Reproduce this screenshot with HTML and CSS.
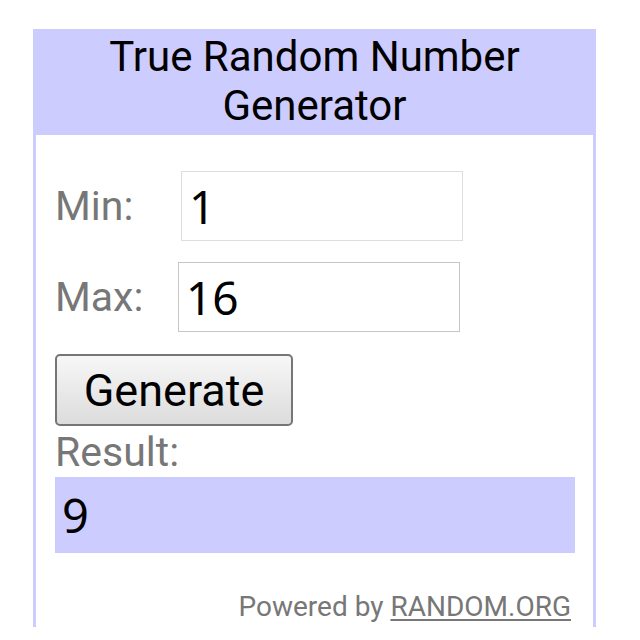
FILE: index.html
```html
<!DOCTYPE html>
<html>
<head>
<meta charset="utf-8">
<link rel="stylesheet" href="styles.css">
</head>
<body>
<div class="widget">
  <div class="header">True Random Number Generator</div>
  <div class="body">
    <div class="row">
      <span class="label label-min">Min:</span>
      <input class="num num-min" type="text" value="1">
    </div>
    <div class="row row-max">
      <span class="label label-max">Max:</span>
      <input class="num num-max" type="text" value="16">
    </div>
    <button class="gen" type="button">Generate</button>
    <div class="label result-label">Result:</div>
    <div class="result">9</div>
    <div class="powered">Powered by <a class="link" href="#">RANDOM.ORG</a></div>
  </div>
</div>
</body>
</html>
```
FILE: styles.css
```css
html, body {
  margin: 0;
  padding: 0;
  background: #ffffff;
}
body {
  font-family: Roboto, "Liberation Sans", sans-serif;
}
.widget {
  margin: 29px 0 0 33px;
  width: 563px;
  height: 598px;
  box-sizing: border-box;
  border-left: 3px solid #ccccff;
  border-right: 3px solid #ccccff;
  background: #ffffff;
}
.header {
  background: #ccccff;
  text-align: center;
  font-size: 42px;
  line-height: 49px;
  color: #000;
  padding: 3px 0 5px;
  margin: 0 -3px;
}
.body {
  padding: 36px 18px 0 19px;
  display: flex;
  flex-direction: column;
  align-items: flex-start;
}
.row {
  display: flex;
  align-items: center;
}
.row-max {
  margin-top: 21px;
}
.label {
  font-size: 41px;
  color: #777777;
  line-height: 49px;
}
.label-min {
  width: 126px;
}
.label-max {
  width: 123px;
}
.num {
  box-sizing: border-box;
  width: 282px;
  height: 70px;
  border: 1px solid #dedede;
  padding: 0 0 0 7px;
  margin: 0;
  font-family: "Noto Sans", Roboto, sans-serif;
  font-size: 46px;
  color: #000;
  background: #fff;
  outline: none;
}
.num-max {
  border-color: #c6c6c6;
}
.gen {
  margin-top: 22px;
  box-sizing: border-box;
  width: 238px;
  height: 72px;
  border: 2px solid #767676;
  border-radius: 5px;
  background: linear-gradient(#f7f7f7, #dcdcdc);
  font-family: Roboto, sans-serif;
  font-size: 45px;
  color: #000;
  padding: 0;
}
.result-label {
  margin-top: 2px;
}
.result {
  box-sizing: border-box;
  width: 520px;
  height: 76px;
  background: #ccccff;
  font-family: "Noto Sans", Roboto, sans-serif;
  font-size: 47px;
  line-height: 76px;
  padding-left: 7px;
  color: #000;
}
.powered {
  align-self: stretch;
  text-align: right;
  padding-right: 4px;
  margin-top: 38px;
  font-size: 28px;
  line-height: 32px;
  color: #777777;
}
.link {
  color: #777777;
  text-decoration: underline;
  text-decoration-thickness: 2px;
  text-underline-offset: 3px;
}
```
